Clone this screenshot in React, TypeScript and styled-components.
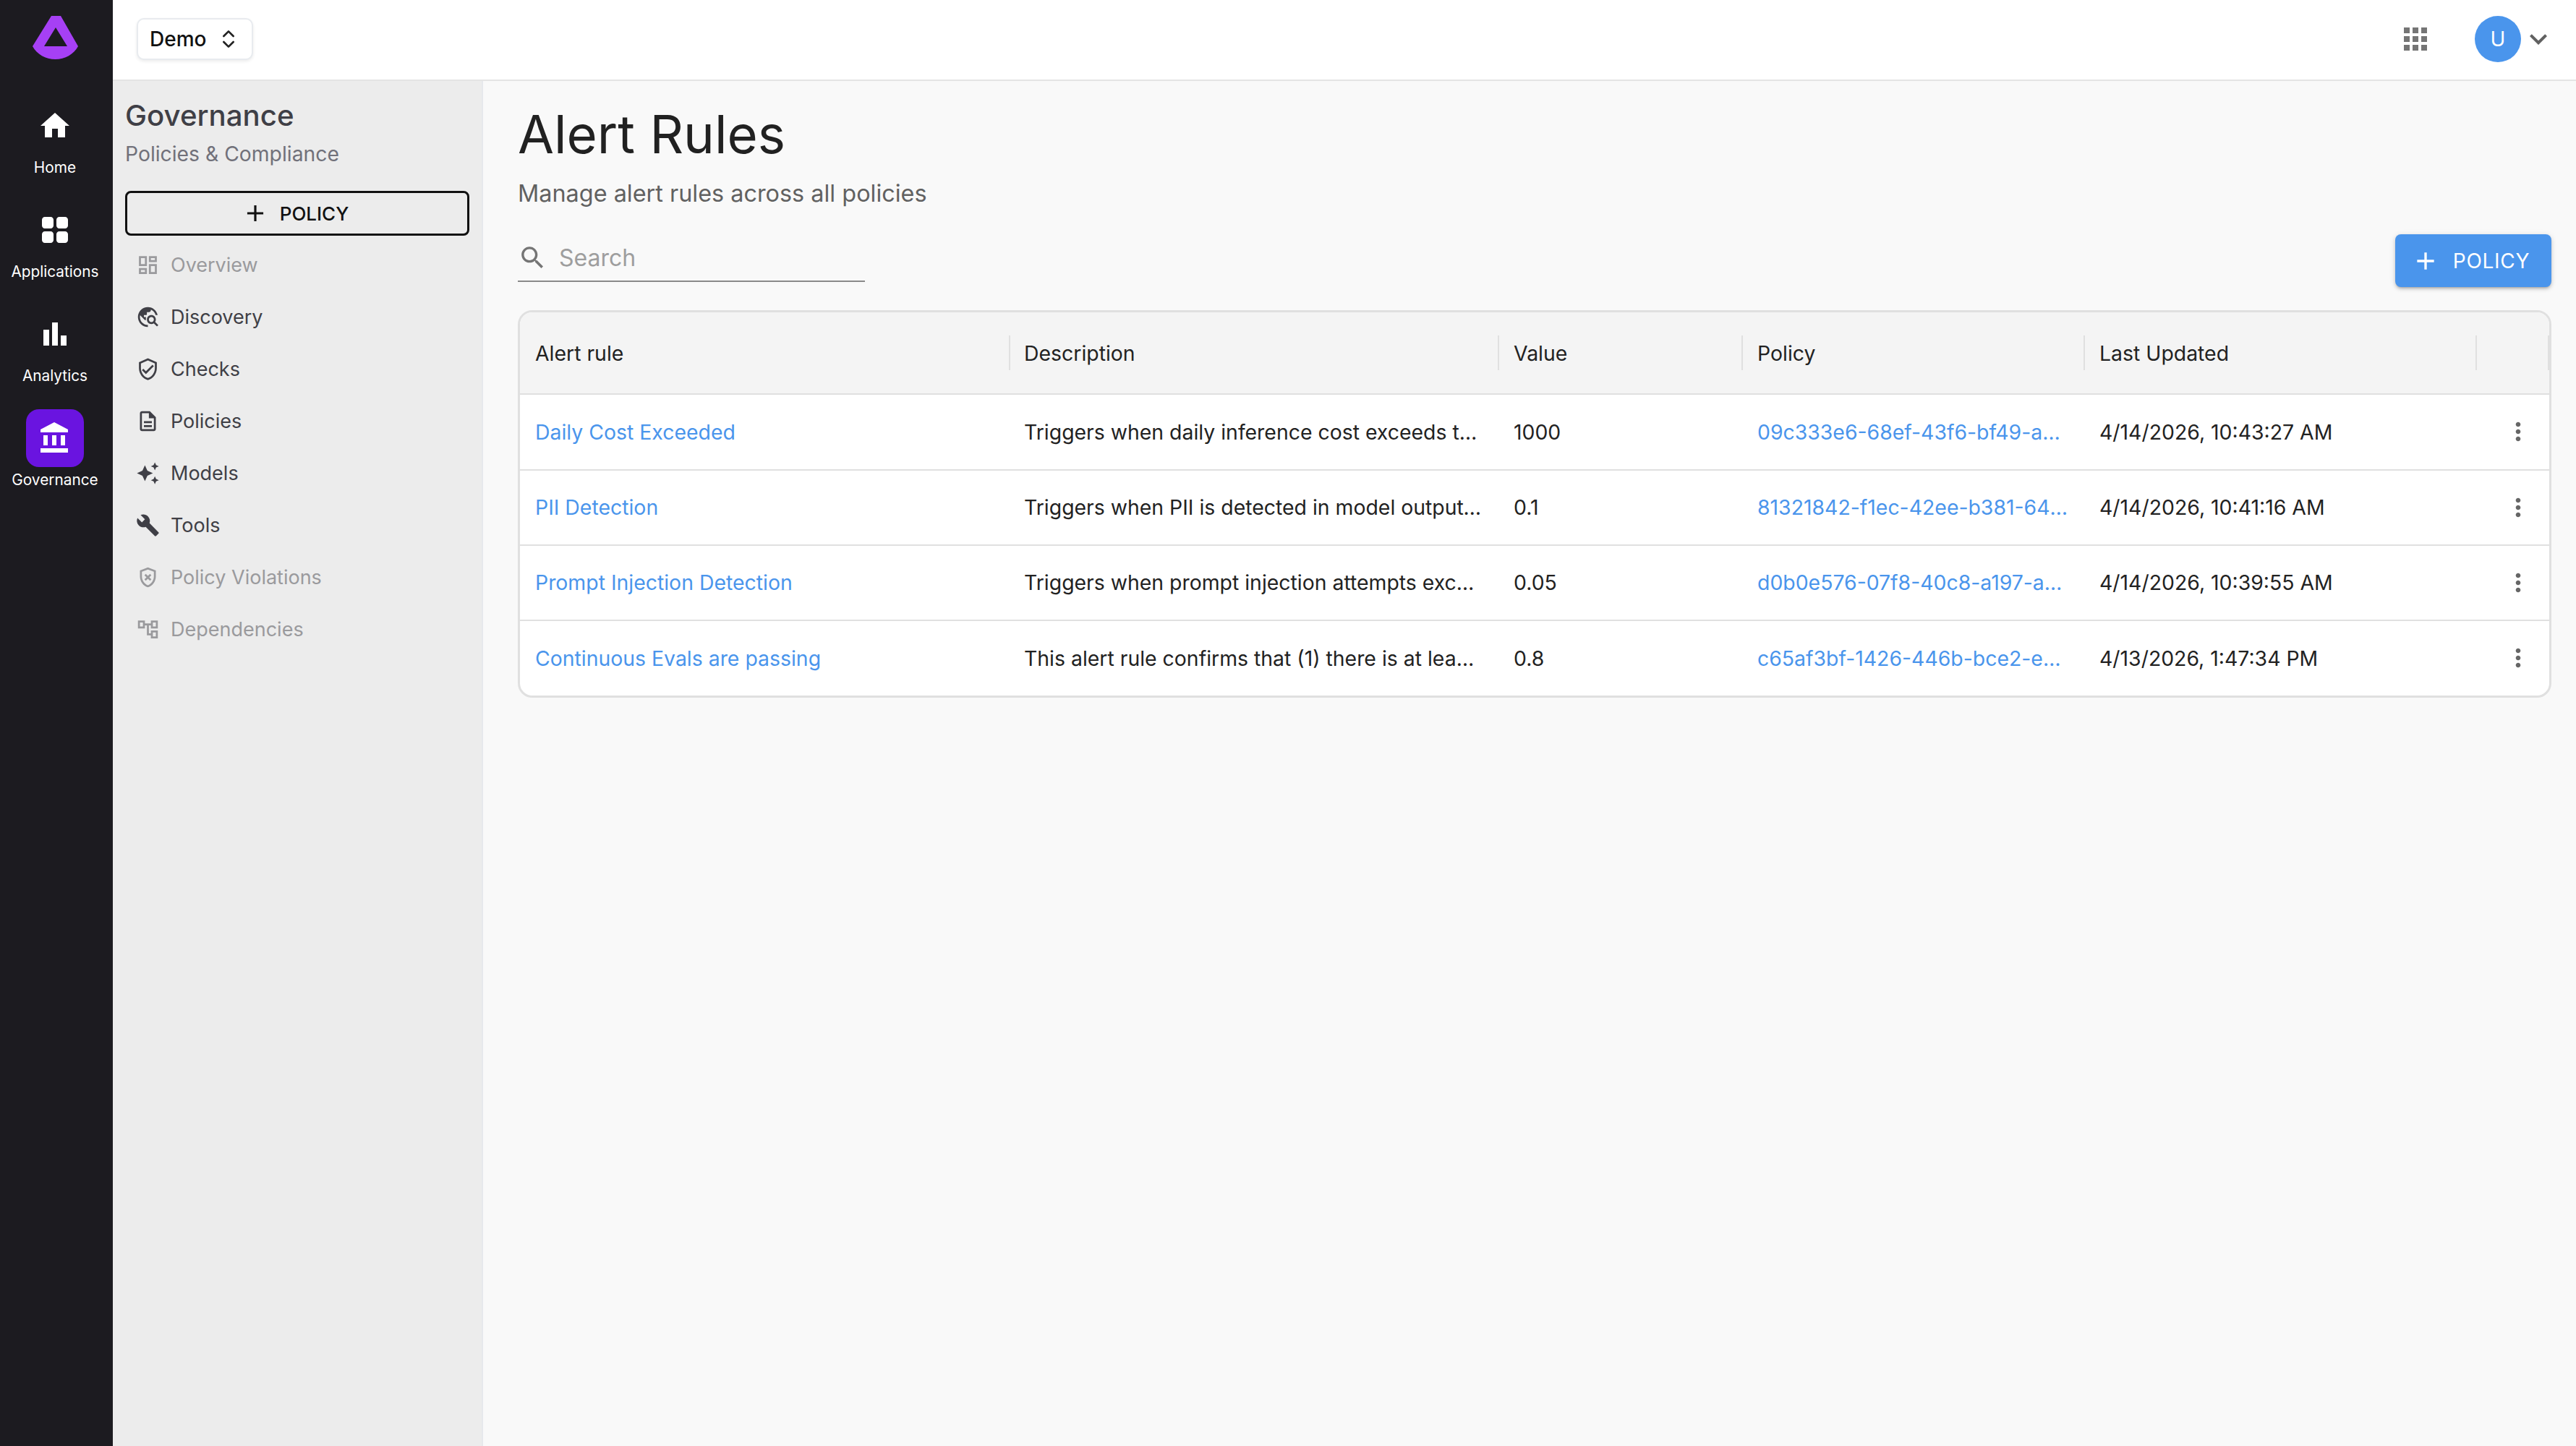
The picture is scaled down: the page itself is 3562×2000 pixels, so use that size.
import React from "react";
import styled, { createGlobalStyle } from "styled-components";

const Global = createGlobalStyle`
  html, body { margin: 0; padding: 0; height: 100%; }
  body { font-family: Inter, "Noto Sans", "Liberation Sans", sans-serif; background: #f9f9f9; color: #1f1f1f; }
  #root { height: 100%; }
  * { box-sizing: border-box; }
`;

const Shell = styled.div`
  display: flex;
  width: 100%;
  height: 2000px;
  overflow: hidden;
`;

const Rail = styled.nav`
  width: 156px;
  flex: none;
  background: #1c1b20;
  display: flex;
  flex-direction: column;
  align-items: center;
  padding: 22px 4px 0 0;
`;

const LogoSlot = styled.div`
  height: 112px;
  display: flex;
  align-items: flex-start;
`;

const RailList = styled.div`
  display: flex;
  flex-direction: column;
  gap: 32px;
  align-items: center;
`;

const RailItem = styled.div`
  display: flex;
  flex-direction: column;
  align-items: center;
  gap: 4px;
`;

const RailTile = styled.div<{ $active?: boolean }>`
  width: 80px;
  height: 80px;
  border-radius: 18px;
  display: flex;
  align-items: center;
  justify-content: center;
  color: #fff;
  background: ${(p) => (p.$active ? "#6a14e0" : "transparent")};
`;

const RailLabel = styled.span`
  font-size: 20.8px;
  line-height: 28px;
  color: #fff;
  white-space: nowrap;
`;

const Column = styled.div`
  flex: 1;
  min-width: 0;
  display: flex;
  flex-direction: column;
`;

const TopBar = styled.header`
  height: 112px;
  flex: none;
  background: #fff;
  border-bottom: 2px solid #e4e4e4;
  display: flex;
  align-items: center;
  justify-content: space-between;
  padding: 0 28px 2px 33px;
`;

const OrgButton = styled.button`
  width: 161px;
  height: 58px;
  background: #fff;
  border: 2px solid #e8ebef;
  border-radius: 10px;
  box-shadow: 0 2px 4px rgba(0, 0, 0, 0.08);
  font: 500 28px Inter, sans-serif;
  color: #111;
  display: flex;
  align-items: center;
  gap: 15px;
  padding: 0 0 0 16px;
`;

const TopActions = styled.div`
  display: flex;
  align-items: center;
`;

const AppsSlot = styled.div`
  color: #757575;
  display: flex;
  margin-right: 58px;
`;

const Avatar = styled.div`
  width: 64px;
  height: 64px;
  border-radius: 50%;
  background: #4a95ec;
  color: #fff;
  font-size: 28px;
  display: flex;
  align-items: center;
  justify-content: center;
`;

const ChevronSlot = styled.div`
  color: #616161;
  display: flex;
`;

const Body = styled.div`
  flex: 1;
  display: flex;
  min-height: 0;
`;

const Side = styled.aside`
  width: 512px;
  flex: none;
  background: #ececec;
  border-right: 2px solid #e6e8ec;
  padding: 23px 17px 0 17px;
`;

const SideTitle = styled.div`
  font-size: 40.2px;
  font-weight: 500;
  line-height: 50px;
  color: #3f3f46;
`;

const SideSub = styled.div`
  font-size: 28.3px;
  line-height: 38px;
  margin-top: 9px;
  color: #71717a;
`;

const OutlineButton = styled.button`
  width: 100%;
  height: 62px;
  margin-top: 32px;
  background: transparent;
  border: 3px solid #111;
  border-radius: 8px;
  font: 500 26px Inter, sans-serif;
  color: #111;
  display: flex;
  align-items: center;
  justify-content: center;
  gap: 15px;
  padding: 0 6px 0 0;
`;

const SideList = styled.div`
  margin-top: 4px;
  display: flex;
  flex-direction: column;
`;

const SideRow = styled.div<{ $muted?: boolean }>`
  height: 72px;
  display: flex;
  align-items: center;
  gap: 15px;
  padding-left: 15px;
  font-size: 27px;
  color: ${(p) => (p.$muted ? "#9a9a9d" : "#3f3f46")};
`;

const Main = styled.main`
  flex: 1;
  min-width: 0;
  padding: 32px 34px 0 48px;
  background: #f9f9f9;
`;

const Title = styled.h1`
  margin: 0;
  font-size: 72.5px;
  font-weight: 400;
  line-height: 84px;
  color: #212121;
`;

const Subtitle = styled.p`
  margin: 20px 0 0;
  font-size: 32.4px;
  line-height: 40px;
  color: #616161;
`;

const Toolbar = styled.div`
  margin-top: 36px;
  display: flex;
  justify-content: space-between;
  align-items: flex-start;
`;

const Search = styled.div`
  width: 480px;
  height: 66px;
  border-bottom: 2px solid #8a8a8a;
  display: flex;
  align-items: center;
  gap: 16px;
  padding: 0;
  color: #757575;
  font-size: 32px;
`;

const SearchPlaceholder = styled.span`
  color: #9e9e9e;
`;

const PrimaryButton = styled.button`
  width: 216px;
  height: 73px;
  background: #4a95ec;
  border: 0;
  border-radius: 8px;
  box-shadow: 0 3px 3px -2px rgba(0, 0, 0, 0.2), 0 3px 5px rgba(0, 0, 0, 0.14), 0 1px 8px rgba(0, 0, 0, 0.1);
  color: #fff;
  font: 400 28px Inter, sans-serif;
  letter-spacing: 0.7px;
  display: flex;
  align-items: center;
  justify-content: center;
  gap: 18px;
  padding: 0 8px 0 0;
`;

const Card = styled.div`
  margin-top: 32px;
  border: 3px solid #e0e0e0;
  border-radius: 20px;
  overflow: hidden;
  background: #fff;
`;

const grid = "678px 676px 337px 473px 542px 100px";

const HeadRow = styled.div`
  display: grid;
  grid-template-columns: ${grid};
  height: 114px;
  align-items: center;
  background: #f4f4f4;
  border-bottom: 2px solid #e0e0e0;
`;

const HeadCell = styled.div`
  height: 48px;
  display: flex;
  align-items: center;
  padding-left: 20px;
  border-right: 2px solid #e0e0e0;
  font-size: 28.4px;
  color: #222;
  &:first-child {
    padding-left: 21px;
  }
  &:nth-child(2) {
    padding-left: 19px;
  }
`;

const Row = styled.div`
  display: grid;
  grid-template-columns: ${grid};
  height: 104px;
  padding-bottom: 1px;
  align-items: center;
  border-bottom: 2px solid #e0e0e0;
  &:nth-child(2) {
    height: 105px;
  }
  &:last-child {
    border-bottom: 0;
    height: 103px;
  }
`;

const Cell = styled.div`
  padding: 0 20px;
  font-size: 28.4px;
  color: #222;
  white-space: nowrap;
  overflow: hidden;
  text-overflow: ellipsis;
  &:nth-child(2) {
    padding: 0 21px 0 19px;
  }
`;

const LinkCell = styled(Cell)`
  color: #4a95ec;
  &:first-child {
    padding-left: 21px;
  }
`;

const MenuCell = styled.div`
  display: flex;
  justify-content: center;
  color: #666;
  padding-left: 14px;
`;

type IconProps = { d: string; size?: number };
const Icon = ({ d, size = 24 }: IconProps) => (
  <svg width={size} height={size} viewBox="0 0 24 24" fill="currentColor" style={{ flex: "none" }}>
    <path d={d} />
  </svg>
);

const P = {
  home: "M10 20v-6h4v6h5v-8h3L12 3 2 12h3v8z",
  apps: "M5 11h4c1.100 0 2-.9 2-2V5c0-1.100-.9-2-2-2H5c-1.100 0-2 .9-2 2v4c0 1.100.9 2 2 2zm0 10h4c1.100 0 2-.9 2-2v-4c0-1.100-.9-2-2-2H5c-1.100 0-2 .9-2 2v4c0 1.100.9 2 2 2zM13 5v4c0 1.100.9 2 2 2h4c1.100 0 2-.9 2-2V5c0-1.100-.9-2-2-2h-4c-1.100 0-2 .9-2 2zm2 16h4c1.100 0 2-.9 2-2v-4c0-1.100-.9-2-2-2h-4c-1.100 0-2 .9-2 2v4c0 1.100.9 2 2 2z",
  bars: "M4 9h4v11H4zm12 4h4v7h-4zm-6-9h4v16h-4z",
  bank: "M4 10v7h3v-7H4zm6 0v7h3v-7h-3zM2 22h19v-3H2v3zm14-12v7h3v-7h-3zm-4.500-9L2 6v2h19V6l-9.500-5z",
  overview: "M19 5v2h-4V5h4M9 5v6H5V5h4m10 8v6h-4v-6h4M9 17v2H5v-2h4M21 3h-8v6h8V3zM11 3H3v10h8V3zm10 8h-8v10h8V11zm-10 4H3v6h8v-6z",
  discovery: "M19.300 16.900c.4-.7.7-1.500.7-2.400 0-2.500-2-4.500-4.500-4.500S11 12 11 14.500s2 4.500 4.500 4.500c.9 0 1.700-.3 2.400-.7l3.200 3.200 1.400-1.400-3.200-3.200zm-3.800.1c-1.400 0-2.500-1.100-2.500-2.500s1.100-2.500 2.500-2.500 2.500 1.100 2.500 2.500-1.100 2.500-2.500 2.500zM12 20v2C6.480 22 2 17.520 2 12S6.480 2 12 2c4.840 0 8.870 3.440 9.800 8h-2.070c-.64-2.460-2.400-4.470-4.730-5.410V5c0 1.100-.9 2-2 2h-2v2c0 .55-.45 1-1 1H8v2h2v3H9l-4.790-4.790C4.080 10.790 4 11.380 4 12c0 4.410 3.590 8 8 8z",
  checks: "M12 1 3 5v6c0 5.550 3.840 10.740 9 12 5.160-1.260 9-6.450 9-12V5l-9-4zm7 10c0 4.520-2.980 8.690-7 9.930-4.020-1.240-7-5.410-7-9.930V6.300l7-3.110 7 3.110V11zm-11.590.59L6 13l4 4 8-8-1.410-1.420L10 14.170z",
  policies: "M8 16h8v2H8zm0-4h8v2H8zm6-10H6c-1.100 0-2 .9-2 2v16c0 1.100.89 2 1.990 2H18c1.100 0 2-.9 2-2V8l-6-6zm4 18H6V4h7v5h5v11z",
  models: "m19 9 1.250-2.750L23 5l-2.750-1.250L19 1l-1.250 2.750L15 5l2.750 1.250zm-7.500.5L9 4 6.500 9.500 1 12l5.500 2.500L9 20l2.500-5.500L17 12zM19 15l-1.250 2.750L15 19l2.750 1.250L19 23l1.250-2.750L23 19l-2.750-1.250z",
  tools: "M22.700 19l-9.100-9.100c.9-2.300.4-5-1.500-6.900-2-2-5-2.400-7.400-1.300L9 6 6 9 1.600 4.700C.4 7.100.9 10.100 2.900 12.100c1.900 1.900 4.600 2.400 6.900 1.500l9.100 9.100c.4.4 1 .4 1.400 0l2.300-2.300c.5-.4.5-1.100.1-1.400z",
  violations: "M12 2 4 5v6.090c0 5.050 3.410 9.760 8 10.910 4.590-1.150 8-5.860 8-10.910V5l-8-3zm6 9.090c0 4-2.550 7.700-6 8.830-3.450-1.130-6-4.820-6-8.830v-4.700l6-2.250 6 2.250v4.700zM9.910 8.500 8.500 9.910 10.590 12 8.500 14.090l1.410 1.410L12 13.420l2.090 2.080 1.410-1.410L13.420 12l2.080-2.090-1.410-1.410L12 10.590 9.910 8.500z",
  deps: "M22 11V3h-7v3H9V3H2v8h7V8h2v10h4v3h7v-8h-7v3h-2V8h2v3h7zM7 9H4V5h3v4zm10 6h3v4h-3v-4zm0-10h3v4h-3V5z",
  grid: "M4 8h4V4H4v4zm6 12h4v-4h-4v4zm-6 0h4v-4H4v4zm0-6h4v-4H4v4zm6 0h4v-4h-4v4zm6-10v4h4V4h-4zm-6 4h4V4h-4v4zm6 6h4v-4h-4v4zm0 6h4v-4h-4v4z",
  expand: "M16.590 8.590 12 13.170 7.410 8.590 6 10l6 6 6-6z",
  search: "M15.500 14h-.79l-.28-.27C15.410 12.590 16 11.110 16 9.500 16 5.910 13.090 3 9.500 3S3 5.910 3 9.500 5.910 16 9.500 16c1.610 0 3.090-.59 4.230-1.570l.27.28v.79l5 4.990L20.490 19l-4.990-5zm-6 0C7.010 14 5 11.990 5 9.500S7.010 5 9.500 5 14 7.010 14 9.500 11.990 14 9.500 14z",
  plus: "M19 13h-6v6h-2v-6H5v-2h6V5h2v6h6v2z",
  more: "M12 8c1.100 0 2-.9 2-2s-.9-2-2-2-2 .9-2 2 .9 2 2 2zm0 2c-1.100 0-2 .9-2 2s.9 2 2 2 2-.9 2-2-.9-2-2-2zm0 6c-1.100 0-2 .9-2 2s.9 2 2 2 2-.9 2-2-.9-2-2-2z",
};

const Logo = () => (
  <svg width="63" height="60" viewBox="0 0 63 60" style={{ display: "block" }}>
    <path
      fillRule="evenodd"
      fill="#a640f5"
      d="M26 0h13l24 42C57 53 45 60 31.500 60S6 53 0 42L26 0zM32 16 16 42h32L32 16z"
    />
  </svg>
);

const UpDown = () => (
  <svg width="32" height="32" viewBox="0 0 24 24" fill="none" stroke="#222" strokeWidth="2" strokeLinecap="round" strokeLinejoin="round" style={{ flex: "none" }}>
    <path d="m7 15 5 5 5-5" />
    <path d="m7 9 5-5 5 5" />
  </svg>
);

const railItems = [
  { label: "Home", d: P.home },
  { label: "Applications", d: P.apps },
  { label: "Analytics", d: P.bars },
  { label: "Governance", d: P.bank, active: true },
];

const sideItems = [
  { label: "Overview", d: P.overview, muted: true },
  { label: "Discovery", d: P.discovery },
  { label: "Checks", d: P.checks },
  { label: "Policies", d: P.policies },
  { label: "Models", d: P.models },
  { label: "Tools", d: P.tools },
  { label: "Policy Violations", d: P.violations, muted: true },
  { label: "Dependencies", d: P.deps, muted: true },
];

const rows = [
  ["Daily Cost Exceeded", "Triggers when daily inference cost exceeds the configured limit", "1000", "09c333e6-68ef-43f6-bf49-a4d17e2c6b90", "4/14/2026, 10:43:27 AM"],
  ["PII Detection", "Triggers when PII is detected in model outputs or prompts", "0.1", "81321842-f1ec-42ee-b381-64c2a9d07e15", "4/14/2026, 10:41:16 AM"],
  ["Prompt Injection Detection", "Triggers when prompt injection attempts exceed the threshold", "0.05", "d0b0e576-07f8-40c8-a197-a3b6e48f1c22", "4/14/2026, 10:39:55 AM"],
  ["Continuous Evals are passing", "This alert rule confirms that (1) there is at least one evaluation", "0.8", "c65af3bf-1426-446b-bce2-e7d09a1f3c64", "4/13/2026, 1:47:34 PM"],
];

const heads = ["Alert rule", "Description", "Value", "Policy", "Last Updated", ""];

export default function App() {
  return (
    <>
      <Global />
      <Shell>
        <Rail>
          <LogoSlot>
            <Logo />
          </LogoSlot>
          <RailList>
            {railItems.map((it) => (
              <RailItem key={it.label}>
                <RailTile $active={it.active}>
                  <Icon d={it.d} size={48} />
                </RailTile>
                <RailLabel>{it.label}</RailLabel>
              </RailItem>
            ))}
          </RailList>
        </Rail>
        <Column>
          <TopBar>
            <OrgButton>
              Demo
              <UpDown />
            </OrgButton>
            <TopActions>
              <AppsSlot>
                <Icon d={P.grid} size={48} />
              </AppsSlot>
              <Avatar>U</Avatar>
              <ChevronSlot>
                <Icon d={P.expand} size={48} />
              </ChevronSlot>
            </TopActions>
          </TopBar>
          <Body>
            <Side>
              <SideTitle>Governance</SideTitle>
              <SideSub>Policies &amp; Compliance</SideSub>
              <OutlineButton>
                <Icon d={P.plus} size={38} />
                POLICY
              </OutlineButton>
              <SideList>
                {sideItems.map((it) => (
                  <SideRow key={it.label} $muted={it.muted}>
                    <Icon d={it.d} size={33} />
                    {it.label}
                  </SideRow>
                ))}
              </SideList>
            </Side>
            <Main>
              <Title>Alert Rules</Title>
              <Subtitle>Manage alert rules across all policies</Subtitle>
              <Toolbar>
                <Search>
                  <Icon d={P.search} size={41} />
                  <SearchPlaceholder>Search</SearchPlaceholder>
                </Search>
                <PrimaryButton>
                  <Icon d={P.plus} size={40} />
                  POLICY
                </PrimaryButton>
              </Toolbar>
              <Card>
                <HeadRow>
                  {heads.map((h, i) => (
                    <HeadCell key={i}>{h}</HeadCell>
                  ))}
                </HeadRow>
                {rows.map((r) => (
                  <Row key={r[0]}>
                    <LinkCell>{r[0]}</LinkCell>
                    <Cell>{r[1]}</Cell>
                    <Cell>{r[2]}</Cell>
                    <LinkCell>{r[3]}</LinkCell>
                    <Cell>{r[4]}</Cell>
                    <MenuCell>
                      <Icon d={P.more} size={40} />
                    </MenuCell>
                  </Row>
                ))}
              </Card>
            </Main>
          </Body>
        </Column>
      </Shell>
    </>
  );
}
